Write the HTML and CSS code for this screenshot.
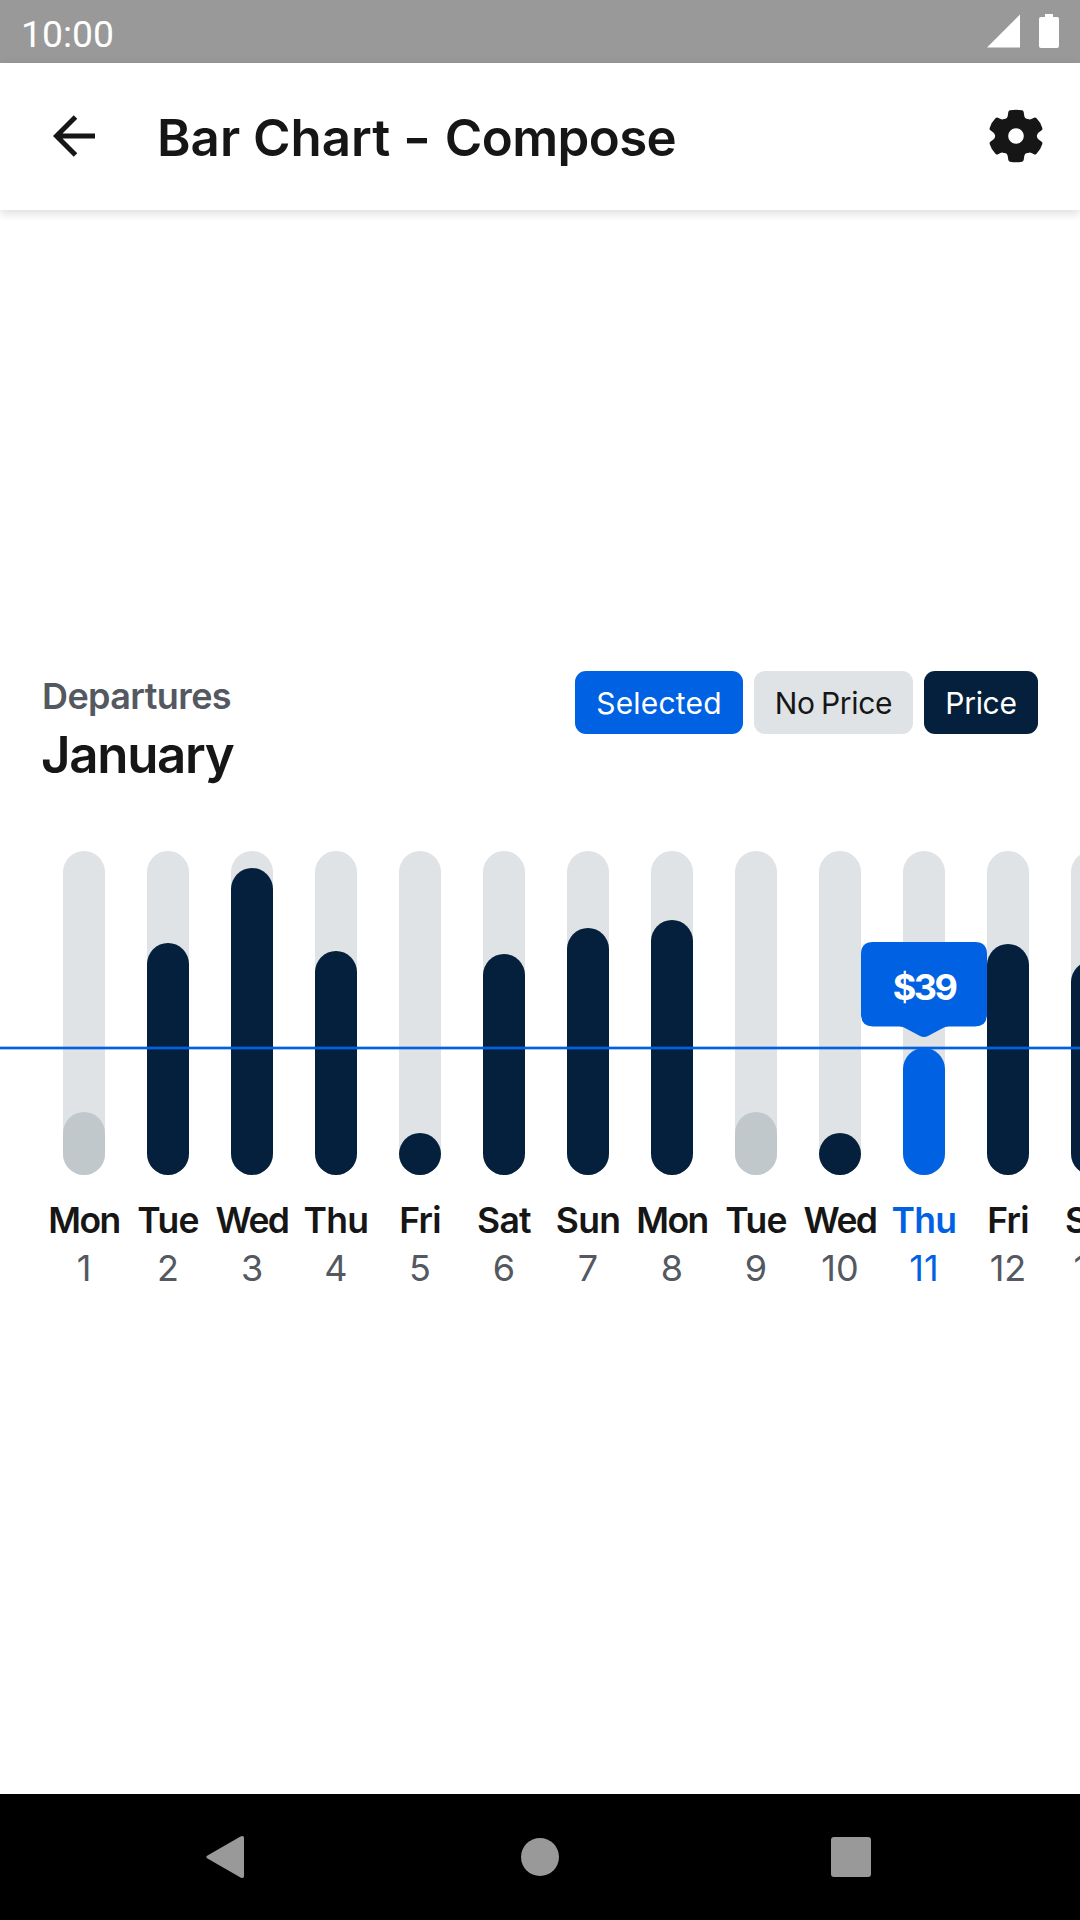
FILE: index.html
```html
<!DOCTYPE html>
<html lang="en">
<head>
<meta charset="utf-8">
<title>Bar Chart - Compose</title>
<link rel="stylesheet" href="styles.css">
</head>
<body>
<div class="status-bar">
  <span class="clock">10:00</span>
  <div class="status-icons">
    <svg width="33" height="34" viewBox="0 0 33 34"><path d="M0 33.5H33V.5Z" fill="#fff"/></svg>
    <svg width="20" height="34" viewBox="0 0 20 34"><path d="M6 0h8v3h4q2 0 2 2v27q0 2-2 2H2q-2 0-2-2V5q0-2 2-2h4Z" fill="#fff"/></svg>
  </div>
</div>
<header class="app-bar">
  <svg class="back" width="42" height="42" viewBox="0 0 42 42" fill="none" stroke="#161616" stroke-width="5"><path d="M42 21H4M22.5 2 3.5 21l19 19"/></svg>
  <h1 class="title">Bar Chart <span class="dash">-</span> <span class="tail">Compose</span></h1>
  <svg class="gear" width="54" height="54" viewBox="88 325 162 162"><path fill="#161616" fill-rule="evenodd" d="M151 329Q169 326 187 329Q191 330 192 334L194 347Q196 357 205 355Q211 358 217 354L223 351Q227 349 230 352Q243 365 248 382Q249 386 246 389L236 396Q227 406 236 416L246 423Q249 426 248 430Q243 447 230 460Q227 463 223 461L217 458Q211 454 205 457Q196 455 194 465L192 478Q191 482 187 483Q169 486 151 483Q147 482 146 478L144 465Q142 455 133 457Q127 454 121 458L115 461Q111 463 108 460Q95 447 90 430Q89 426 92 423L102 416Q111 406 102 396L92 389Q89 386 90 382Q95 365 108 352Q111 349 115 351L121 354Q127 358 133 355Q142 357 144 347L146 334Q147 330 151 329ZM169 382.500a23.500 23.500 0 1 0 0 47a23.500 23.500 0 1 0 0-47Z"/></svg>
</header>
<main class="content">
  <section class="heading">
    <div class="heading-text">
      <p class="eyebrow">Departures</p>
      <h2 class="month">January</h2>
    </div>
    <div class="legend">
      <span class="chip chip-selected">Selected</span>
      <span class="chip chip-none">No Price</span>
      <span class="chip chip-price">Price</span>
    </div>
  </section>
  <section class="chart">
    <div class="day"><div class="track"><div class="bar none" style="height:63px"></div></div><b class="wide">Mon</b><span>1</span></div>
    <div class="day"><div class="track"><div class="bar" style="height:232px"></div></div><b>Tue</b><span>2</span></div>
    <div class="day"><div class="track"><div class="bar" style="height:307px"></div></div><b class="wide">Wed</b><span>3</span></div>
    <div class="day"><div class="track"><div class="bar" style="height:224px"></div></div><b>Thu</b><span>4</span></div>
    <div class="day"><div class="track"><div class="bar" style="height:42px"></div></div><b>Fri</b><span>5</span></div>
    <div class="day"><div class="track"><div class="bar" style="height:221px"></div></div><b>Sat</b><span>6</span></div>
    <div class="day"><div class="track"><div class="bar" style="height:247px"></div></div><b>Sun</b><span>7</span></div>
    <div class="day"><div class="track"><div class="bar" style="height:255px"></div></div><b class="wide">Mon</b><span>8</span></div>
    <div class="day"><div class="track"><div class="bar none" style="height:63px"></div></div><b>Tue</b><span>9</span></div>
    <div class="day"><div class="track"><div class="bar" style="height:42px"></div></div><b class="wide">Wed</b><span>10</span></div>
    <div class="day selected"><div class="track"><div class="bar" style="height:127px"></div></div><b>Thu</b><span>11</span>
      <div class="tooltip">
        <svg class="bubble" width="126" height="95" viewBox="0 0 126 95"><path fill="#0062e3" d="M12 0H114Q126 0 126 12V72Q126 84.500 114 84.500H88Q84 84.500 81 86.500L67 94Q63 96 59 94L45 86.500Q42 84.500 38 84.500H12Q0 84.500 0 72V12Q0 0 12 0Z"/></svg>
        <em>$39</em>
      </div>
    </div>
    <div class="day"><div class="track"><div class="bar" style="height:231px"></div></div><b>Fri</b><span>12</span></div>
    <div class="day"><div class="track"><div class="bar" style="height:214px"></div></div><b>Sat</b><span>13</span></div>
    <div class="price-line"></div>
  </section>
</main>
<nav class="nav-bar">
  <svg width="44" height="44" viewBox="0 0 44 44"><path fill="#999" d="M4.500 20.500 37.500 1.500Q41 0 41 3V41Q41 44 37.500 42.500L4.500 23.500Q2 22 4.500 20.500Z"/></svg>
  <svg width="44" height="44" viewBox="0 0 44 44"><circle cx="24" cy="22" r="19" fill="#999"/></svg>
  <svg width="44" height="44" viewBox="0 0 44 44"><rect x="2" y="2" width="40" height="40" rx="3" fill="#999"/></svg>
</nav>
</body>
</html>
```
FILE: styles.css
```css
* { box-sizing: border-box; margin: 0; padding: 0; }
body {
  display: flex;
  flex-direction: column;
  width: 1080px;
  height: 1920px;
  overflow: hidden;
  background: #fff;
  color: #161616;
  font-family: Inter, "Liberation Sans", sans-serif;
}
svg { display: block; flex: none; }
.status-bar {
  display: flex;
  justify-content: space-between;
  height: 63px;
  padding: 14px 21px 0 21px;
  background: #999;
}
.clock { color: #fff; font: 37.300px/40px Roboto, sans-serif; }
.status-icons { display: flex; gap: 19px; }
.app-bar {
  display: flex;
  align-items: center;
  height: 147px;
  padding: 0 37px 2px 53px;
  background: #fff;
  box-shadow: 0 3px 10px rgba(0, 0, 0, .15);
}
.title {
  flex: 1;
  margin-left: 62px;
  padding-top: 4px;
  font-size: 51px;
  line-height: 60px;
  font-weight: 600;
  white-space: nowrap;
}
.title .dash { display: inline-block; margin: 0 3px 0 2px; transform: scaleX(1.2); }
.title .tail { letter-spacing: -.6px; }
.content { flex: 1; padding-top: 461px; }
.heading {
  display: flex;
  justify-content: space-between;
  height: 180px;
  padding: 0 42px;
}
.eyebrow {
  margin-top: 3px;
  color: #545860;
  font-size: 36px;
  line-height: 44px;
  font-weight: 600;
  letter-spacing: -.6px;
}
.month {
  margin-top: 7px;
  margin-left: -1px;
  font-size: 51px;
  line-height: 60px;
  font-weight: 600;
  letter-spacing: -1.3px;
}
.legend { display: flex; gap: 11px; }
.chip {
  height: 63px;
  border-radius: 11px;
  font-size: 30px;
  line-height: 64px;
  text-align: center;
  white-space: nowrap;
}
.chip-selected { width: 168px; background: #0062e3; color: #fff; letter-spacing: .2px; }
.chip-none { width: 159px; background: #dfe3e5; letter-spacing: -.3px; word-spacing: -2px; }
.chip-price { width: 114px; background: #05203c; color: #fff; letter-spacing: -.3px; }
.chart {
  position: relative;
  display: flex;
  width: 1080px;
  padding-left: 42px;
  overflow: hidden;
}
.day {
  position: relative;
  display: flex;
  flex: none;
  flex-direction: column;
  align-items: center;
  width: 84px;
  white-space: nowrap;
}
.track {
  display: flex;
  align-items: flex-end;
  width: 42px;
  height: 324px;
  margin-bottom: 21px;
  border-radius: 21px;
  background: #dfe3e5;
}
.bar { width: 42px; border-radius: 21px; background: #05203c; }
.bar.none { background: #c1c8cc; }
.day b {
  font-size: 35.500px;
  line-height: 49px;
  font-weight: 600;
  letter-spacing: -.7px;
}
.day b.wide { letter-spacing: -1.500px; }
.day > span { color: #545860; font-size: 36px; line-height: 47px; }
.day.selected b, .day.selected > span { color: #0062e3; }
.selected .bar { background: #0062e3; }
.tooltip {
  position: absolute;
  z-index: 2;
  top: 91px;
  left: -21px;
  width: 126px;
  height: 95px;
  text-align: center;
}
.bubble { position: absolute; }
.tooltip em {
  position: relative;
  color: #fff;
  font-size: 36px;
  line-height: 91px;
  font-style: normal;
  font-weight: 700;
  letter-spacing: -2.500px;
}
.price-line {
  position: absolute;
  z-index: 1;
  top: 196px;
  left: 0;
  right: 0;
  height: 2px;
  background: #0062e3;
  box-shadow: 0 -1px rgba(0, 98, 227, .35), 0 1px rgba(0, 98, 227, .35);
}
.nav-bar {
  display: flex;
  justify-content: space-between;
  height: 126px;
  padding: 41px 207px 0 203px;
  background: #000;
}
```
